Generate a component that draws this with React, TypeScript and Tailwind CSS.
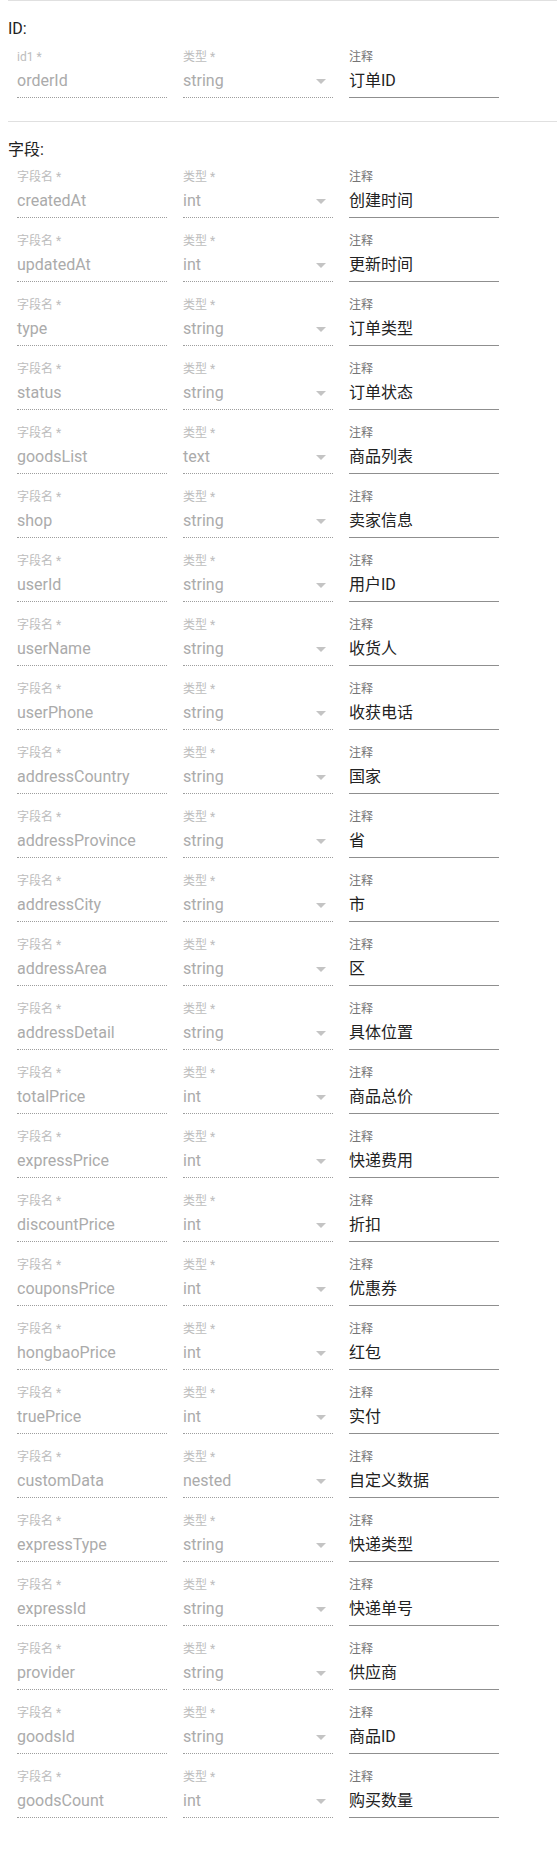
import React from "react";

type Row = { name: string; type: string; note: string };

const fields: Row[] = [
  { name: "createdAt", type: "int", note: "创建时间" },
  { name: "updatedAt", type: "int", note: "更新时间" },
  { name: "type", type: "string", note: "订单类型" },
  { name: "status", type: "string", note: "订单状态" },
  { name: "goodsList", type: "text", note: "商品列表" },
  { name: "shop", type: "string", note: "卖家信息" },
  { name: "userId", type: "string", note: "用户ID" },
  { name: "userName", type: "string", note: "收货人" },
  { name: "userPhone", type: "string", note: "收获电话" },
  { name: "addressCountry", type: "string", note: "国家" },
  { name: "addressProvince", type: "string", note: "省" },
  { name: "addressCity", type: "string", note: "市" },
  { name: "addressArea", type: "string", note: "区" },
  { name: "addressDetail", type: "string", note: "具体位置" },
  { name: "totalPrice", type: "int", note: "商品总价" },
  { name: "expressPrice", type: "int", note: "快递费用" },
  { name: "discountPrice", type: "int", note: "折扣" },
  { name: "couponsPrice", type: "int", note: "优惠券" },
  { name: "hongbaoPrice", type: "int", note: "红包" },
  { name: "truePrice", type: "int", note: "实付" },
  { name: "customData", type: "nested", note: "自定义数据" },
  { name: "expressType", type: "string", note: "快递类型" },
  { name: "expressId", type: "string", note: "快递单号" },
  { name: "provider", type: "string", note: "供应商" },
  { name: "goodsId", type: "string", note: "商品ID" },
  { name: "goodsCount", type: "int", note: "购买数量" },
];

function DisabledField({ label, value, select }: { label: string; value: string; select?: boolean }) {
  return (
    <div className="relative w-[150px] h-[47px]">
      <div className="h-[12px] text-[12px] leading-[12px] text-[#bdbdbd] whitespace-nowrap">{label}</div>
      <div className="mt-[10px] h-[16px] text-[16px] leading-[16px] text-[#ababab] whitespace-nowrap">{value}</div>
      {select && (
        <svg
          className="absolute right-0 top-[18px]"
          width="24"
          height="24"
          viewBox="0 0 24 24"
          fill="#c4c4c4"
        >
          <path d="M7 10l5 5 5-5z" />
        </svg>
      )}
      <div className="absolute left-0 right-0 top-[46px] border-b border-dotted border-[#9e9e9e]" />
    </div>
  );
}

function NoteField({ value }: { value: string }) {
  return (
    <div className="relative w-[150px] h-[47px]">
      <div className="h-[12px] text-[12px] leading-[12px] text-[#757575] whitespace-nowrap">注释</div>
      <div className="mt-[10px] h-[16px] text-[16px] leading-[16px] text-[#222222] whitespace-nowrap">{value}</div>
      <div className="absolute left-0 right-0 top-[46px] h-px bg-[#8f8f8f]" />
    </div>
  );
}

function FieldRow({ label, row }: { label: string; row: Row }) {
  return (
    <div className="flex gap-[16px] h-[64px] pl-[9px]">
      <DisabledField label={label} value={row.name} />
      <DisabledField label="类型 *" value={row.type} select />
      <NoteField value={row.note} />
    </div>
  );
}

export default function App() {
  return (
    <div
      className="bg-white min-h-[1851px] pl-2 text-[#212121]"
      style={{ fontFamily: 'Roboto, "Noto Sans CJK SC", "Liberation Sans", sans-serif' }}
    >
      <section className="border-t border-[#e0e0e0] pb-[6px]">
        <div className="mt-[16px] h-[24px] text-[16px] leading-[24px]">ID:</div>
        <div className="mt-[10px]">
          <FieldRow label="id1 *" row={{ name: "orderId", type: "string", note: "订单ID" }} />
        </div>
      </section>
      <section className="border-t border-[#e0e0e0]">
        <div className="mt-[16px] h-[24px] text-[16px] leading-[24px]">字段:</div>
        <div className="mt-[9px]">
          {fields.map((f) => (
            <FieldRow key={f.name} label="字段名 *" row={f} />
          ))}
        </div>
      </section>
    </div>
  );
}
